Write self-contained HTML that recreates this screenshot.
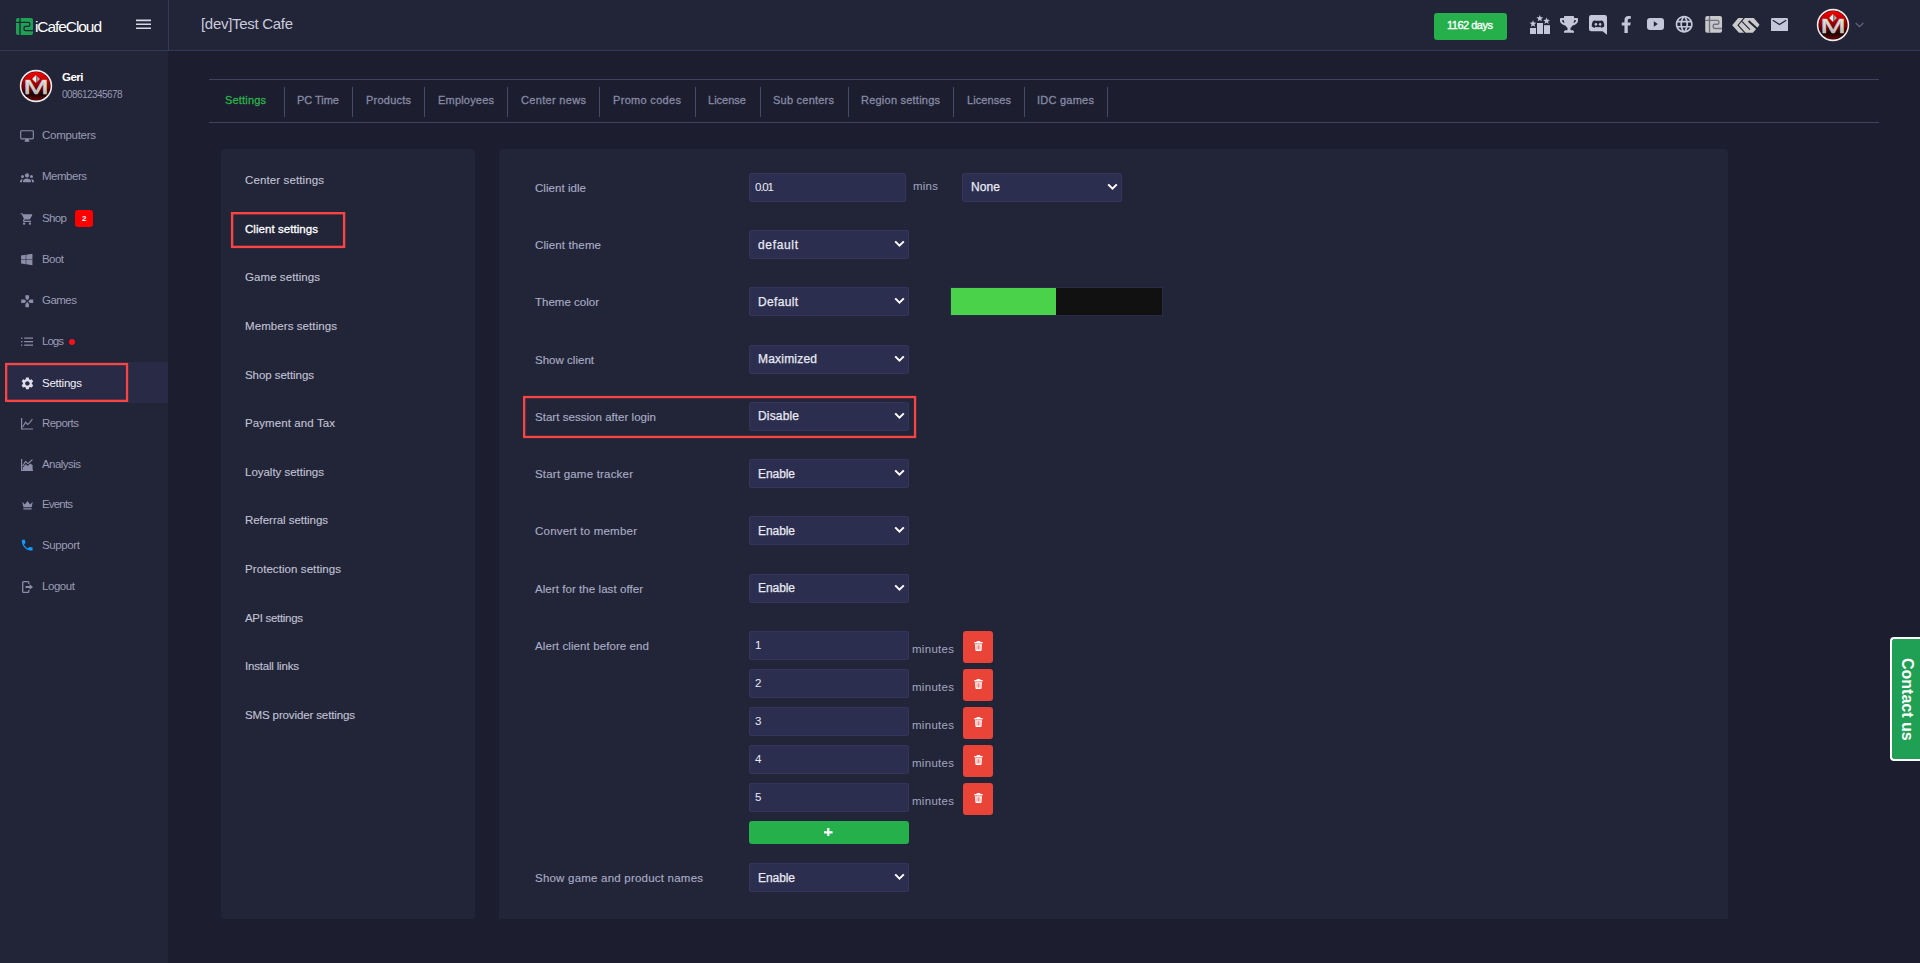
<!DOCTYPE html>
<html lang="en"><head><meta charset="utf-8"><title>iCafeCloud - Client settings</title>
<style>
html,body{margin:0;padding:0;overflow:hidden;}
body{width:1920px;height:963px;overflow:hidden;background:#1c1d2f;position:relative;font-family:"Liberation Sans",sans-serif;}
.b{position:absolute;display:block;}
.t{position:absolute;white-space:nowrap;line-height:1;display:block;}
</style></head><body>
<div class="b" style="left:0px;top:0px;width:1920px;height:50px;background:#222437;"></div>
<div class="b" style="left:0px;top:50px;width:1920px;height:1px;background:#363859;"></div>
<div class="b" style="left:0px;top:51px;width:168px;height:912px;background:#222437;"></div>
<div class="b" style="left:168px;top:0px;width:1px;height:50px;background:#363859;"></div>
<div class="b" style="left:5px;top:362px;width:163px;height:41px;background:#282a46;border-radius:4px 0 0 4px;"></div>
<div class="b" style="left:209px;top:79px;width:1670px;height:1px;background:#41435c;"></div>
<div class="b" style="left:209px;top:122px;width:1670px;height:1px;background:#41435c;"></div>
<div class="b" style="left:284px;top:87px;width:1px;height:30px;background:#484a63;"></div>
<div class="b" style="left:352px;top:87px;width:1px;height:30px;background:#484a63;"></div>
<div class="b" style="left:424px;top:87px;width:1px;height:30px;background:#484a63;"></div>
<div class="b" style="left:507px;top:87px;width:1px;height:30px;background:#484a63;"></div>
<div class="b" style="left:599px;top:87px;width:1px;height:30px;background:#484a63;"></div>
<div class="b" style="left:695px;top:87px;width:1px;height:30px;background:#484a63;"></div>
<div class="b" style="left:760px;top:87px;width:1px;height:30px;background:#484a63;"></div>
<div class="b" style="left:848px;top:87px;width:1px;height:30px;background:#484a63;"></div>
<div class="b" style="left:953px;top:87px;width:1px;height:30px;background:#484a63;"></div>
<div class="b" style="left:1024px;top:87px;width:1px;height:30px;background:#484a63;"></div>
<div class="b" style="left:1107px;top:87px;width:1px;height:30px;background:#484a63;"></div>
<div class="b" style="left:221px;top:149px;width:254px;height:770px;background:#222438;border-radius:4px;"></div>
<div class="b" style="left:499px;top:149px;width:1229px;height:770px;background:#222438;border-radius:4px 4px 0 0;"></div>
<svg class="b" style="left:4px;top:361px" width="126.2" height="43"><rect x="2.15" y="3.05" width="120.9" height="36.8" fill="none" stroke="#f94444" stroke-width="2.3"/></svg>
<svg class="b" style="left:229px;top:211px" width="118.3" height="39.1"><rect x="3.1" y="2.2" width="112" height="33.7" fill="none" stroke="#f94444" stroke-width="2.4"/></svg>
<svg class="b" style="left:522px;top:394px" width="396.2" height="46.1"><rect x="2.15" y="3.05" width="390.9" height="39.9" fill="none" stroke="#f94444" stroke-width="2.3"/></svg>
<div class="b" style="left:1434px;top:13px;width:73px;height:27px;background:#26b04b;border-radius:3px;"></div>
<div class="b" style="left:75px;top:210px;width:18px;height:17px;background:#fe0000;border-radius:3px;"></div>
<div class="b" style="left:69px;top:339px;width:6px;height:6px;background:#f5101c;border-radius:50%;"></div>
<div class="b" style="left:749px;top:173px;width:157px;height:29px;background:#2c2e4f;border:1px solid #33365a;border-radius:2px;box-sizing:border-box;"></div>
<div class="b" style="left:962px;top:173px;width:160px;height:29px;background:#2c2e4f;border:1px solid #33365a;border-radius:2px;box-sizing:border-box;"></div>
<svg class="b" style="left:1107.3px;top:183.1px" width="11" height="8" viewBox="0 0 11 8"><path d="M1.2 1.4 L5.5 5.7 L9.8 1.4" fill="none" stroke="#fff" stroke-width="2"/></svg>
<div class="b" style="left:749px;top:230px;width:160px;height:29px;background:#2c2e4f;border:1px solid #33365a;border-radius:2px;box-sizing:border-box;"></div>
<svg class="b" style="left:894.3px;top:240.1px" width="11" height="8" viewBox="0 0 11 8"><path d="M1.2 1.4 L5.5 5.7 L9.8 1.4" fill="none" stroke="#fff" stroke-width="2"/></svg>
<div class="b" style="left:749px;top:287px;width:160px;height:29px;background:#2c2e4f;border:1px solid #33365a;border-radius:2px;box-sizing:border-box;"></div>
<svg class="b" style="left:894.3px;top:297.1px" width="11" height="8" viewBox="0 0 11 8"><path d="M1.2 1.4 L5.5 5.7 L9.8 1.4" fill="none" stroke="#fff" stroke-width="2"/></svg>
<div class="b" style="left:749px;top:345px;width:160px;height:29px;background:#2c2e4f;border:1px solid #33365a;border-radius:2px;box-sizing:border-box;"></div>
<svg class="b" style="left:894.3px;top:355.1px" width="11" height="8" viewBox="0 0 11 8"><path d="M1.2 1.4 L5.5 5.7 L9.8 1.4" fill="none" stroke="#fff" stroke-width="2"/></svg>
<div class="b" style="left:749px;top:402px;width:160px;height:29px;background:#2c2e4f;border:1px solid #33365a;border-radius:2px;box-sizing:border-box;"></div>
<svg class="b" style="left:894.3px;top:412.1px" width="11" height="8" viewBox="0 0 11 8"><path d="M1.2 1.4 L5.5 5.7 L9.8 1.4" fill="none" stroke="#fff" stroke-width="2"/></svg>
<div class="b" style="left:749px;top:459px;width:160px;height:29px;background:#2c2e4f;border:1px solid #33365a;border-radius:2px;box-sizing:border-box;"></div>
<svg class="b" style="left:894.3px;top:469.1px" width="11" height="8" viewBox="0 0 11 8"><path d="M1.2 1.4 L5.5 5.7 L9.8 1.4" fill="none" stroke="#fff" stroke-width="2"/></svg>
<div class="b" style="left:749px;top:516px;width:160px;height:29px;background:#2c2e4f;border:1px solid #33365a;border-radius:2px;box-sizing:border-box;"></div>
<svg class="b" style="left:894.3px;top:526.1px" width="11" height="8" viewBox="0 0 11 8"><path d="M1.2 1.4 L5.5 5.7 L9.8 1.4" fill="none" stroke="#fff" stroke-width="2"/></svg>
<div class="b" style="left:749px;top:574px;width:160px;height:29px;background:#2c2e4f;border:1px solid #33365a;border-radius:2px;box-sizing:border-box;"></div>
<svg class="b" style="left:894.3px;top:584.1px" width="11" height="8" viewBox="0 0 11 8"><path d="M1.2 1.4 L5.5 5.7 L9.8 1.4" fill="none" stroke="#fff" stroke-width="2"/></svg>
<div class="b" style="left:749px;top:863px;width:160px;height:29px;background:#2c2e4f;border:1px solid #33365a;border-radius:2px;box-sizing:border-box;"></div>
<svg class="b" style="left:894.3px;top:873.1px" width="11" height="8" viewBox="0 0 11 8"><path d="M1.2 1.4 L5.5 5.7 L9.8 1.4" fill="none" stroke="#fff" stroke-width="2"/></svg>
<div class="b" style="left:950px;top:287px;width:213px;height:29px;background:#111;border:1px solid #2a2c45;box-sizing:border-box;"></div>
<div class="b" style="left:951px;top:288px;width:105px;height:27px;background:#4bd24b;"></div>
<div class="b" style="left:749px;top:631px;width:160px;height:29px;background:#2c2e4f;border:1px solid #33365a;border-radius:2px;box-sizing:border-box;"></div>
<div class="b" style="left:963px;top:631px;width:30px;height:32px;background:#ea4338;border-radius:3px;"></div>
<svg class="b" style="left:973.8px;top:641px" width="9" height="10.100" viewBox="0 0 10 11"><path d="M3.3 0h3.4l.6 1H9.6v1.6H.4V1H2.7zM1.1 3.4h7.8l-.5 6.6a1 1 0 0 1-1 1H2.6a1 1 0 0 1-1-1z" fill="#fff"/><path d="M3.4 4.6v4.8M5 4.6v4.8M6.6 4.6v4.8" stroke="#ea4338" stroke-width=".7"/></svg>
<div class="b" style="left:749px;top:669px;width:160px;height:29px;background:#2c2e4f;border:1px solid #33365a;border-radius:2px;box-sizing:border-box;"></div>
<div class="b" style="left:963px;top:669px;width:30px;height:32px;background:#ea4338;border-radius:3px;"></div>
<svg class="b" style="left:973.8px;top:679px" width="9" height="10.100" viewBox="0 0 10 11"><path d="M3.3 0h3.4l.6 1H9.6v1.6H.4V1H2.7zM1.1 3.4h7.8l-.5 6.6a1 1 0 0 1-1 1H2.6a1 1 0 0 1-1-1z" fill="#fff"/><path d="M3.4 4.6v4.8M5 4.6v4.8M6.6 4.6v4.8" stroke="#ea4338" stroke-width=".7"/></svg>
<div class="b" style="left:749px;top:707px;width:160px;height:29px;background:#2c2e4f;border:1px solid #33365a;border-radius:2px;box-sizing:border-box;"></div>
<div class="b" style="left:963px;top:707px;width:30px;height:32px;background:#ea4338;border-radius:3px;"></div>
<svg class="b" style="left:973.8px;top:717px" width="9" height="10.100" viewBox="0 0 10 11"><path d="M3.3 0h3.4l.6 1H9.6v1.6H.4V1H2.7zM1.1 3.4h7.8l-.5 6.6a1 1 0 0 1-1 1H2.6a1 1 0 0 1-1-1z" fill="#fff"/><path d="M3.4 4.6v4.8M5 4.6v4.8M6.6 4.6v4.8" stroke="#ea4338" stroke-width=".7"/></svg>
<div class="b" style="left:749px;top:745px;width:160px;height:29px;background:#2c2e4f;border:1px solid #33365a;border-radius:2px;box-sizing:border-box;"></div>
<div class="b" style="left:963px;top:745px;width:30px;height:32px;background:#ea4338;border-radius:3px;"></div>
<svg class="b" style="left:973.8px;top:755px" width="9" height="10.100" viewBox="0 0 10 11"><path d="M3.3 0h3.4l.6 1H9.6v1.6H.4V1H2.7zM1.1 3.4h7.8l-.5 6.6a1 1 0 0 1-1 1H2.6a1 1 0 0 1-1-1z" fill="#fff"/><path d="M3.4 4.6v4.8M5 4.6v4.8M6.6 4.6v4.8" stroke="#ea4338" stroke-width=".7"/></svg>
<div class="b" style="left:749px;top:783px;width:160px;height:29px;background:#2c2e4f;border:1px solid #33365a;border-radius:2px;box-sizing:border-box;"></div>
<div class="b" style="left:963px;top:783px;width:30px;height:32px;background:#ea4338;border-radius:3px;"></div>
<svg class="b" style="left:973.8px;top:793px" width="9" height="10.100" viewBox="0 0 10 11"><path d="M3.3 0h3.4l.6 1H9.6v1.6H.4V1H2.7zM1.1 3.4h7.8l-.5 6.6a1 1 0 0 1-1 1H2.6a1 1 0 0 1-1-1z" fill="#fff"/><path d="M3.4 4.6v4.8M5 4.6v4.8M6.6 4.6v4.8" stroke="#ea4338" stroke-width=".7"/></svg>
<div class="b" style="left:749px;top:821px;width:160px;height:23px;background:#25b04b;border-radius:3px;"></div>
<svg class="b" style="left:824px;top:827.500px" width="8.600" height="8.600" viewBox="0 0 8.600 8.600"><path d="M3.200 0h2.200v3.200H8.600v2.200H5.400V8.600H3.200V5.400H0V3.200h3.200z" fill="#fff"/></svg>
<div class="b" style="left:1890px;top:637px;width:30px;height:124px;background:#1fa055;border:2px solid #fff;border-right:0;border-radius:4px 0 0 4px;box-sizing:border-box;"></div>
<div class="t" style="left:1898.700px;top:658px;font-size:16px;font-weight:700;color:#fff;transform-origin:0 0;transform:rotate(90deg) translate(0,-100%);line-height:1;">Contact us</div>
<!-- logo -->
<svg class="b" style="left:16px;top:18px" width="17" height="17" viewBox="0 0 17 17"><rect width="17" height="17" rx="2" fill="#1fa154"/><path d="M4 0V17M0 4.3H12.2Q13.8 4.3 13.8 5.9V6.8Q13.8 8.4 12.2 8.4H9.6Q8 8.4 8 10V11Q8 12.6 9.6 12.6H17" fill="none" stroke="#1d2736" stroke-width="1.350"/></svg>
<!-- hamburger -->
<svg class="b" style="left:136px;top:19px" width="15" height="11" viewBox="0 0 15 11"><path d="M0 1.4H15M0 5.3H15M0 9.2H15" stroke="#d6d7e4" stroke-width="1.6"/></svg>
<!-- avatar sidebar -->
<svg class="b" style="left:19px;top:69px" width="34" height="34" viewBox="0 0 34 34"><defs><linearGradient id="ag" x1="0" y1="0" x2="0" y2="1"><stop offset="0" stop-color="#f50000"/><stop offset=".22" stop-color="#d00000"/><stop offset=".55" stop-color="#7c0000"/><stop offset=".8" stop-color="#1c0000"/><stop offset="1" stop-color="#6a0000"/></linearGradient><linearGradient id="dg" x1="0" y1="0" x2="1" y2="0"><stop offset="0" stop-color="#ffffff"/><stop offset=".5" stop-color="#e8e8e8"/><stop offset=".52" stop-color="#777"/><stop offset="1" stop-color="#d0d0d0"/></linearGradient><linearGradient id="sg" x1="0" y1="0" x2="0" y2="1"><stop offset="0" stop-color="#fafafa"/><stop offset=".5" stop-color="#d8d8d8"/><stop offset="1" stop-color="#9c9c9c"/></linearGradient></defs><circle cx="17" cy="17" r="16.2" fill="#ececf0"/><circle cx="17" cy="17" r="14.6" fill="#3a0505"/><circle cx="17" cy="17" r="14" fill="url(#ag)"/><text transform="translate(17.1 25) scale(1.56 1)" text-anchor="middle" font-family="Liberation Sans, sans-serif" font-weight="400" font-size="19.4" fill="url(#sg)" stroke="#c9c9c9" stroke-width=".6">M</text><path d="M17 5.900L20.900 10L17 14.100L13.100 10Z" fill="url(#dg)"/></svg>
<!-- avatar top -->
<svg class="b" style="left:1816px;top:8px" width="34" height="34" viewBox="0 0 34 34"><circle cx="17" cy="17" r="16.2" fill="#ececf0"/><circle cx="17" cy="17" r="14.6" fill="#3a0505"/><circle cx="17" cy="17" r="14" fill="url(#ag)"/><text transform="translate(17.1 25) scale(1.56 1)" text-anchor="middle" font-family="Liberation Sans, sans-serif" font-weight="400" font-size="19.4" fill="url(#sg)" stroke="#c9c9c9" stroke-width=".6">M</text><path d="M17 5.900L20.900 10L17 14.100L13.100 10Z" fill="url(#dg)"/></svg>
<svg class="b" style="left:1855px;top:22px" width="9" height="6" viewBox="0 0 9 6"><path d="M.7 1L4.5 4.6L8.3 1" fill="none" stroke="#62668a" stroke-width="1.200"/></svg>

<!-- sidebar icons -->
<svg class="b" style="left:20px;top:130px" width="14" height="12" viewBox="0 0 14 12"><rect x=".7" y=".7" width="12.6" height="8.1" rx=".8" fill="none" stroke="#8b8ea9" stroke-width="1.150"/><path d="M5.6 9L4.4 11.8H9.6L8.4 9Z" fill="#8b8ea9"/></svg>
<svg class="b" style="left:20px;top:172.5px" width="14" height="10" viewBox="0 0 14 10"><g fill="#8b8ea9"><circle cx="7" cy="2.4" r="2.1"/><path d="M3 9.3V8.2C3 6.6 5.2 5.6 7 5.6S11 6.6 11 8.2V9.3Z"/><circle cx="2.5" cy="3.4" r="1.5"/><circle cx="11.5" cy="3.4" r="1.5"/><path d="M0 9.3V8.4C0 7.2 1.3 6.2 3 6.1C2.3 6.7 2 7.4 2 8.2V9.3ZM14 9.3V8.4C14 7.2 12.7 6.2 11 6.1C11.7 6.7 12 7.4 12 8.2V9.3Z"/></g></svg>
<svg class="b" style="left:19.5px;top:212px" width="14" height="14" viewBox="0 0 24 24"><path fill="#8b8ea9" d="M7 18c-1.1 0-1.99.9-1.99 2S5.9 22 7 22s2-.9 2-2-.9-2-2-2zM1 2v2h2l3.6 7.59-1.35 2.45c-.16.28-.25.61-.25.96 0 1.1.9 2 2 2h12v-2H7.42c-.14 0-.25-.11-.25-.25l.03-.12.9-1.63h7.45c.75 0 1.41-.41 1.75-1.03l3.58-6.49c.08-.14.12-.31.12-.48 0-.55-.45-1-1-1H5.21l-.94-2H1zm16 16c-1.1 0-1.99.9-1.99 2s.89 2 1.99 2 2-.9 2-2-.9-2-2-2z"/></svg>
<svg class="b" style="left:21px;top:253.300px" width="11.5" height="13" viewBox="0 0 448 512"><path fill="#8b8ea9" d="M0 93.7l183.6-25.3v177.4H0V93.7zm0 324.6l183.6 25.3V268.4H0v149.9zm203.8 28L448 480V268.4H203.8v177.9zm0-380.6v180.1H448V32L203.8 65.7z"/></svg>
<svg class="b" style="left:19.8px;top:293.6px" width="14.4" height="14.4" viewBox="0 0 24 24"><path fill="#8b8ea9" d="M15 7.5V2H9v5.5l3 3 3-3zM7.5 9H2v6h5.5l3-3-3-3zM9 16.500V22h6v-5.500l-3-3-3 3zM16.500 9l-3 3 3 3H22V9h-5.500z"/></svg>
<svg class="b" style="left:21px;top:337.300px" width="12" height="10" viewBox="0 0 12 10"><path d="M0 1.200H1.400M3.200 1.200H12M0 4.650H1.400M3.200 4.650H12M0 8.100H1.400M3.200 8.100H12" stroke="#8b8ea9" stroke-width="1.200"/></svg>
<svg class="b" style="left:19.600px;top:375.900px" width="14.8" height="14.8" viewBox="0 0 24 24"><path fill="#dcdde8" d="M19.140 12.940c.04-.3.06-.61.06-.94 0-.32-.02-.64-.07-.94l2.030-1.580c.18-.14.23-.41.12-.61l-1.920-3.320c-.12-.22-.37-.29-.59-.22l-2.390.96c-.5-.38-1.030-.7-1.620-.94l-.36-2.540c-.04-.24-.24-.41-.48-.41h-3.840c-.24 0-.43.17-.47.41l-.36 2.540c-.59.24-1.130.57-1.620.94l-2.390-.96c-.22-.08-.47 0-.59.22L2.740 8.870c-.12.21-.08.47.12.61l2.030 1.580c-.05.3-.09.63-.09.94s.02.640.07.940l-2.030 1.580c-.18.14-.23.410-.12.610l1.920 3.320c.12.220.37.290.59.220l2.390-.96c.5.380 1.030.7 1.620.94l.36 2.540c.05.240.24.410.48.410h3.840c.24 0 .44-.17.47-.41l.36-2.540c.59-.24 1.130-.56 1.620-.94l2.390.96c.22.080.47 0 .59-.22l1.920-3.320c.12-.22.070-.47-.12-.61l-2.010-1.580zM12 15.600c-1.980 0-3.600-1.620-3.600-3.600s1.620-3.600 3.600-3.600 3.600 1.620 3.600 3.600-1.620 3.600-3.600 3.600z"/></svg>
<svg class="b" style="left:21px;top:418px" width="12" height="12" viewBox="0 0 12 12"><path d="M.6 0V11H12" fill="none" stroke="#8b8ea9" stroke-width="1.2"/><path d="M1.6 9L4.6 4.2L6.6 6.4L8.8 4.6L11.4 1" fill="none" stroke="#8b8ea9" stroke-width="1.1"/></svg>
<svg class="b" style="left:21px;top:459px" width="12" height="12" viewBox="0 0 12 12"><path d="M.6 0V11.4H12" fill="none" stroke="#8b8ea9" stroke-width="1.2"/><path d="M1.8 11V8.6L4.6 5.2L6.8 7L9 4.6L11.6 6V11Z" fill="#8b8ea9"/><path d="M1.6 7L4.6 2.4L6.8 4.6L8.8 3L11.4 .6" fill="none" stroke="#8b8ea9" stroke-width="1.1"/></svg>
<svg class="b" style="left:21.5px;top:500.5px" width="11" height="9" viewBox="0 0 11 9"><path fill="#8b8ea9" d="M.2 .8L2.9 3.6L5.5 0L8.1 3.6L10.800 .8L9.6 6.200H1.400ZM1.400 7.300H9.600V8.600H1.400Z"/></svg>
<svg class="b" style="left:19.6px;top:538.4px" width="14.400" height="14.400" viewBox="0 0 24 24"><path fill="#0d9bff" d="M6.620 10.790c1.440 2.830 3.760 5.140 6.590 6.590l2.200-2.200c.27-.27.67-.36 1.020-.24 1.120.37 2.330.57 3.570.57.55 0 1 .45 1 1V20c0 .55-.45 1-1 1-9.390 0-17-7.610-17-17 0-.55.45-1 1-1h3.500c.55 0 1 .45 1 1 0 1.250.2 2.450.57 3.570.11.350.03.740-.25 1.020l-2.200 2.200z"/></svg>
<svg class="b" style="left:21.500px;top:581px" width="11.500" height="12" viewBox="0 0 11.500 12"><path d="M6.800 3V1.600Q6.800 .7 5.900 .7H1.600Q.7 .7 .7 1.600V10.400Q.7 11.300 1.600 11.300H5.900Q6.800 11.300 6.800 10.400V9" fill="none" stroke="#8b8ea9" stroke-width="1.300"/><path d="M3.600 5.100H7.600V3.200L11 6L7.600 8.800V6.900H3.600Z" fill="#8b8ea9"/></svg>

<!-- top right icons -->
<svg class="b" style="left:1529px;top:14px" width="22" height="21" viewBox="0 0 22 21"><g fill="#c5c7d8"><rect x="1" y="14" width="6" height="6"/><rect x="8" y="9" width="6" height="11"/><rect x="15" y="11.200" width="6" height="8.800"/><path d="M0 -3.500L.95 -1.200L3.400 -1.050L1.500 .55L2.100 2.950L0 1.600L-2.100 2.950L-1.500 .55L-3.400 -1.050L-.95 -1.200Z" transform="translate(4 9.800)"/><path d="M0 -3.500L.95 -1.200L3.400 -1.050L1.500 .55L2.100 2.950L0 1.600L-2.100 2.950L-1.500 .55L-3.400 -1.050L-.95 -1.200Z" transform="translate(10.800 4.400)"/><path d="M0 -3.500L.95 -1.200L3.400 -1.050L1.500 .55L2.100 2.950L0 1.600L-2.100 2.950L-1.500 .55L-3.400 -1.050L-.95 -1.200Z" transform="translate(17.600 7)"/></g></svg>
<svg class="b" style="left:1560px;top:16px" width="18" height="16.800" viewBox="0 0 576 512" preserveAspectRatio="none"><path fill="#c5c7d8" d="M552 64H448V24c0-13.300-10.700-24-24-24H152c-13.300 0-24 10.700-24 24v40H24C10.700 64 0 74.700 0 88v56c0 35.700 22.500 72.400 61.900 100.700 31.500 22.700 69.800 37.100 110 41.700C203.300 338.500 240 360 240 360v72h-48c-35.300 0-64 20.700-64 56v12c0 6.600 5.400 12 12 12h296c6.600 0 12-5.400 12-12v-12c0-35.300-28.700-56-64-56h-48v-72s36.700-21.500 68.100-73.600c40.300-4.600 78.600-19 110-41.700 39.300-28.300 61.900-65 61.900-100.700V88c0-13.300-10.700-24-24-24zM99.300 192.800C74.900 175.200 64 155.600 64 144v-16h64.200c1 32.600 5.800 61.200 12.800 86.200-15.100-5.200-29.200-12.400-41.700-21.400zM512 144c0 16.100-17.700 36.100-35.300 48.800-12.500 9-26.700 16.200-41.800 21.400 7-25 11.800-53.600 12.800-86.200H512v16z"/></svg>
<svg class="b" style="left:1589px;top:15px" width="18" height="20" viewBox="0 0 18 20"><path fill="#c5c7d8" d="M2.200 0H15.800Q18 0 18 2.200V19.800L13.600 16.200H2.200Q0 16.200 0 14V2.200Q0 0 2.200 0Z"/><path fill="#222437" d="M6.200 5.200C5.200 5.400 4.300 5.800 3.800 6.200C3 8 2.700 10 2.800 11.600C3.700 12.300 4.700 12.700 5.600 12.900L6.200 11.900C5.800 11.800 5.500 11.600 5.200 11.400C7.400 12.400 10.600 12.400 12.800 11.400C12.500 11.600 12.200 11.800 11.800 11.900L12.400 12.900C13.300 12.700 14.300 12.300 15.200 11.600C15.300 10 15 8 14.200 6.200C13.700 5.800 12.800 5.400 11.800 5.200L11.400 6C9.800 5.800 8.200 5.800 6.600 6Z"/><ellipse cx="6.900" cy="9.300" rx="1.250" ry="1.400" fill="#c5c7d8"/><ellipse cx="11.100" cy="9.300" rx="1.250" ry="1.400" fill="#c5c7d8"/></svg>
<svg class="b" style="left:1621.300px;top:16px" width="10.600" height="17" viewBox="0 0 320 512"><path fill="#c5c7d8" d="M279.140 288l14.220-92.660h-88.910v-60.130c0-25.350 12.420-50.060 52.240-50.060h40.420V6.260S260.430 0 225.360 0c-73.220 0-121.080 44.380-121.080 124.720v70.620H22.890V288h81.390v224h100.170V288z"/></svg>
<svg class="b" style="left:1647px;top:18.300px" width="17" height="12" viewBox="0 0 17 12"><rect width="17" height="12" rx="3" fill="#c5c7d8"/><path d="M6.800 3.300L10.800 6L6.800 8.700Z" fill="#222437"/></svg>
<svg class="b" style="left:1674.300px;top:14px" width="20.400" height="20.400" viewBox="0 0 24 24"><path fill="#c5c7d8" d="M11.990 2C6.470 2 2 6.480 2 12s4.470 10 9.990 10C17.520 22 22 17.520 22 12S17.520 2 11.990 2zm6.930 6h-2.950c-.32-1.250-.78-2.450-1.380-3.560 1.840.63 3.370 1.910 4.330 3.560zM12 4.040c.83 1.200 1.480 2.530 1.910 3.960h-3.820c.43-1.430 1.080-2.760 1.910-3.960zM4.260 14C4.100 13.360 4 12.690 4 12s.1-1.360.26-2h3.380c-.08.660-.14 1.320-.14 2 0 .68.060 1.340.14 2H4.260zm.82 2h2.950c.32 1.250.78 2.450 1.380 3.560-1.840-.63-3.370-1.900-4.330-3.560zm2.950-8H5.080c.96-1.660 2.490-2.930 4.330-3.560C8.810 5.550 8.350 6.750 8.030 8zM12 19.960c-.83-1.200-1.480-2.530-1.910-3.960h3.820c-.43 1.430-1.080 2.760-1.910 3.960zM14.340 14H9.660c-.09-.66-.16-1.320-.16-2 0-.68.070-1.350.16-2h4.680c.09.650.16 1.320.16 2 0 .68-.07 1.340-.16 2zm.25 5.560c.6-1.110 1.060-2.310 1.380-3.560h2.950c-.96 1.650-2.490 2.930-4.330 3.560zM16.360 14c.08-.66.14-1.320.14-2 0-.68-.06-1.340-.14-2h3.380c.16.640.26 1.310.26 2s-.1 1.360-.26 2h-3.380z"/></svg>
<svg class="b" style="left:1705.400px;top:16.200px" width="17.300" height="16.800" viewBox="0 0 17 17"><rect width="17" height="17" rx="2" fill="#c8c8c8"/><path d="M4.300 0V17M0 4.400H12.200Q13.800 4.400 13.800 6V6.800Q13.800 8.400 12.200 8.400H9.600Q8 8.400 8 10V11Q8 12.600 9.600 12.600H17" fill="none" stroke="#6e7084" stroke-width="1.400"/></svg>
<svg class="b" style="left:1728px;top:14px" width="36" height="23" viewBox="0 0 36 23"><path fill="#cbcbcb" d="M4.180 11.230L10.270 3.940H25.800L31.530 10.750L29.380 13.860L24.840 18.870H10.990Z"/><path d="M16.480 3.700L10.030 11.230L17.200 19.100" fill="none" stroke="#222437" stroke-width="1.100"/><path d="M13.860 7.400L21.980 15.530" fill="none" stroke="#222437" stroke-width="1.100"/><path d="M20.540 6.930L29.200 14.800" fill="none" stroke="#222437" stroke-width="1.900"/></svg>
<svg class="b" style="left:1771px;top:17.700px" width="17" height="13.600" viewBox="0 0 17 13.600"><rect width="17" height="13.600" rx="1.400" fill="#c5c7d8"/><path d="M1.800 2.200L8.500 6.600L15.200 2.200" fill="none" stroke="#222437" stroke-width="1.300"/></svg>

<span class="t" style="left:35px;top:18.88px;font-size:15.5px;color:#ffffff;font-weight:400;letter-spacing:-1.076px;">iCafeCloud</span>
<span class="t" style="left:201px;top:16.30px;font-size:15px;color:#c9cbdc;font-weight:400;letter-spacing:-0.299px;">[dev]Test Cafe</span>
<span class="t" style="left:62px;top:72.27px;font-size:11.5px;color:#ffffff;font-weight:700;letter-spacing:-0.505px;">Geri</span>
<span class="t" style="left:62px;top:89.53px;font-size:10px;color:#9799b3;font-weight:400;letter-spacing:-0.568px;">008612345678</span>
<span class="t" style="left:42px;top:130.27px;font-size:11.5px;color:#9a9db6;font-weight:400;letter-spacing:-0.281px;">Computers</span>
<span class="t" style="left:42px;top:171.27px;font-size:11.5px;color:#9a9db6;font-weight:400;letter-spacing:-0.490px;">Members</span>
<span class="t" style="left:42px;top:213.27px;font-size:11.5px;color:#9a9db6;font-weight:400;letter-spacing:-0.620px;">Shop</span>
<span class="t" style="left:42px;top:254.27px;font-size:11.5px;color:#9a9db6;font-weight:400;letter-spacing:-0.557px;">Boot</span>
<span class="t" style="left:42px;top:295.27px;font-size:11.5px;color:#9a9db6;font-weight:400;letter-spacing:-0.520px;">Games</span>
<span class="t" style="left:42px;top:336.27px;font-size:11.5px;color:#9a9db6;font-weight:400;letter-spacing:-0.979px;">Logs</span>
<span class="t" style="left:42px;top:378.27px;font-size:11.5px;color:#f2f2f7;font-weight:400;letter-spacing:-0.223px;">Settings</span>
<span class="t" style="left:42px;top:418.27px;font-size:11.5px;color:#9a9db6;font-weight:400;letter-spacing:-0.547px;">Reports</span>
<span class="t" style="left:42px;top:459.27px;font-size:11.5px;color:#9a9db6;font-weight:400;letter-spacing:-0.547px;">Analysis</span>
<span class="t" style="left:42px;top:499.27px;font-size:11.5px;color:#9a9db6;font-weight:400;letter-spacing:-0.834px;">Events</span>
<span class="t" style="left:42px;top:540.27px;font-size:11.5px;color:#9a9db6;font-weight:400;letter-spacing:-0.380px;">Support</span>
<span class="t" style="left:42px;top:581.27px;font-size:11.5px;color:#9a9db6;font-weight:400;letter-spacing:-0.438px;">Logout</span>
<span class="t" style="left:82px;top:215.23px;font-size:8px;color:#ffffff;font-weight:700;letter-spacing:-0.453px;">2</span>
<span class="t" style="left:1447px;top:19.69px;font-size:11px;color:#ffffff;font-weight:400;letter-spacing:-0.494px;-webkit-text-stroke:0.35px;">1162 days</span>
<span class="t" style="left:225px;top:94.69px;font-size:11px;color:#2bb24c;font-weight:400;letter-spacing:0.179px;-webkit-text-stroke:0.3px;">Settings</span>
<span class="t" style="left:297px;top:94.69px;font-size:11px;color:#868aa3;font-weight:400;letter-spacing:-0.031px;-webkit-text-stroke:0.3px;">PC Time</span>
<span class="t" style="left:366px;top:94.69px;font-size:11px;color:#868aa3;font-weight:400;letter-spacing:0.225px;-webkit-text-stroke:0.3px;">Products</span>
<span class="t" style="left:438px;top:94.69px;font-size:11px;color:#868aa3;font-weight:400;letter-spacing:0.197px;-webkit-text-stroke:0.3px;">Employees</span>
<span class="t" style="left:521px;top:94.69px;font-size:11px;color:#868aa3;font-weight:400;letter-spacing:0.323px;-webkit-text-stroke:0.3px;">Center news</span>
<span class="t" style="left:613px;top:94.69px;font-size:11px;color:#868aa3;font-weight:400;letter-spacing:0.319px;-webkit-text-stroke:0.3px;">Promo codes</span>
<span class="t" style="left:708px;top:94.69px;font-size:11px;color:#868aa3;font-weight:400;letter-spacing:0.013px;-webkit-text-stroke:0.3px;">License</span>
<span class="t" style="left:773px;top:94.69px;font-size:11px;color:#868aa3;font-weight:400;letter-spacing:0.230px;-webkit-text-stroke:0.3px;">Sub centers</span>
<span class="t" style="left:861px;top:94.69px;font-size:11px;color:#868aa3;font-weight:400;letter-spacing:0.227px;-webkit-text-stroke:0.3px;">Region settings</span>
<span class="t" style="left:967px;top:94.69px;font-size:11px;color:#868aa3;font-weight:400;letter-spacing:0.083px;-webkit-text-stroke:0.3px;">Licenses</span>
<span class="t" style="left:1037px;top:94.69px;font-size:11px;color:#868aa3;font-weight:400;letter-spacing:0.246px;-webkit-text-stroke:0.3px;">IDC games</span>
<span class="t" style="left:245px;top:175.27px;font-size:11.5px;color:#c0c2d3;font-weight:400;letter-spacing:0.117px;-webkit-text-stroke:0.12px;">Center settings</span>
<span class="t" style="left:245px;top:224.27px;font-size:11.5px;color:#ffffff;font-weight:400;letter-spacing:0.055px;-webkit-text-stroke:0.3px;">Client settings</span>
<span class="t" style="left:245px;top:272.27px;font-size:11.5px;color:#c0c2d3;font-weight:400;letter-spacing:0.070px;-webkit-text-stroke:0.12px;">Game settings</span>
<span class="t" style="left:245px;top:321.27px;font-size:11.5px;color:#c0c2d3;font-weight:400;letter-spacing:0.082px;-webkit-text-stroke:0.12px;">Members settings</span>
<span class="t" style="left:245px;top:370.27px;font-size:11.5px;color:#c0c2d3;font-weight:400;letter-spacing:-0.057px;-webkit-text-stroke:0.12px;">Shop settings</span>
<span class="t" style="left:245px;top:418.27px;font-size:11.5px;color:#c0c2d3;font-weight:400;letter-spacing:0.096px;-webkit-text-stroke:0.12px;">Payment and Tax</span>
<span class="t" style="left:245px;top:467.27px;font-size:11.5px;color:#c0c2d3;font-weight:400;letter-spacing:-0.018px;-webkit-text-stroke:0.12px;">Loyalty settings</span>
<span class="t" style="left:245px;top:515.27px;font-size:11.5px;color:#c0c2d3;font-weight:400;letter-spacing:-0.046px;-webkit-text-stroke:0.12px;">Referral settings</span>
<span class="t" style="left:245px;top:564.27px;font-size:11.5px;color:#c0c2d3;font-weight:400;letter-spacing:0.077px;-webkit-text-stroke:0.12px;">Protection settings</span>
<span class="t" style="left:245px;top:613.27px;font-size:11.5px;color:#c0c2d3;font-weight:400;letter-spacing:-0.307px;-webkit-text-stroke:0.12px;">API settings</span>
<span class="t" style="left:245px;top:661.27px;font-size:11.5px;color:#c0c2d3;font-weight:400;letter-spacing:-0.188px;-webkit-text-stroke:0.12px;">Install links</span>
<span class="t" style="left:245px;top:710.27px;font-size:11.5px;color:#c0c2d3;font-weight:400;letter-spacing:-0.125px;-webkit-text-stroke:0.12px;">SMS provider settings</span>
<span class="t" style="left:535px;top:183.27px;font-size:11.5px;color:#a9acc4;font-weight:400;letter-spacing:0.050px;-webkit-text-stroke:0.15px;">Client idle</span>
<span class="t" style="left:535px;top:240.27px;font-size:11.5px;color:#a9acc4;font-weight:400;letter-spacing:0.131px;-webkit-text-stroke:0.15px;">Client theme</span>
<span class="t" style="left:535px;top:297.27px;font-size:11.5px;color:#a9acc4;font-weight:400;letter-spacing:0.008px;-webkit-text-stroke:0.15px;">Theme color</span>
<span class="t" style="left:535px;top:355.27px;font-size:11.5px;color:#a9acc4;font-weight:400;letter-spacing:0.019px;-webkit-text-stroke:0.15px;">Show client</span>
<span class="t" style="left:535px;top:412.27px;font-size:11.5px;color:#a9acc4;font-weight:400;letter-spacing:0.035px;-webkit-text-stroke:0.15px;">Start session after login</span>
<span class="t" style="left:535px;top:469.27px;font-size:11.5px;color:#a9acc4;font-weight:400;letter-spacing:0.200px;-webkit-text-stroke:0.15px;">Start game tracker</span>
<span class="t" style="left:535px;top:526.27px;font-size:11.5px;color:#a9acc4;font-weight:400;letter-spacing:0.223px;-webkit-text-stroke:0.15px;">Convert to member</span>
<span class="t" style="left:535px;top:584.27px;font-size:11.5px;color:#a9acc4;font-weight:400;letter-spacing:0.063px;-webkit-text-stroke:0.15px;">Alert for the last offer</span>
<span class="t" style="left:535px;top:641.27px;font-size:11.5px;color:#a9acc4;font-weight:400;letter-spacing:0.097px;-webkit-text-stroke:0.15px;">Alert client before end</span>
<span class="t" style="left:535px;top:873.27px;font-size:11.5px;color:#a9acc4;font-weight:400;letter-spacing:0.216px;-webkit-text-stroke:0.15px;">Show game and product names</span>
<span class="t" style="left:755px;top:182.27px;font-size:11.5px;color:#e9eaf3;font-weight:400;letter-spacing:-1.130px;">0.01</span>
<span class="t" style="left:913px;top:181.27px;font-size:11.5px;color:#a3a6bf;font-weight:400;letter-spacing:0.240px;">mins</span>
<span class="t" style="left:971px;top:181.34px;font-size:12px;color:#e9eaf3;font-weight:400;letter-spacing:0.104px;-webkit-text-stroke:0.25px;">None</span>
<span class="t" style="left:758px;top:239.34px;font-size:12px;color:#e9eaf3;font-weight:400;letter-spacing:0.661px;-webkit-text-stroke:0.25px;">default</span>
<span class="t" style="left:758px;top:296.34px;font-size:12px;color:#e9eaf3;font-weight:400;letter-spacing:0.328px;-webkit-text-stroke:0.25px;">Default</span>
<span class="t" style="left:758px;top:353.34px;font-size:12px;color:#e9eaf3;font-weight:400;letter-spacing:0.205px;-webkit-text-stroke:0.25px;">Maximized</span>
<span class="t" style="left:758px;top:410.34px;font-size:12px;color:#e9eaf3;font-weight:400;letter-spacing:0.161px;-webkit-text-stroke:0.25px;">Disable</span>
<span class="t" style="left:758px;top:468.34px;font-size:12px;color:#e9eaf3;font-weight:400;letter-spacing:-0.075px;-webkit-text-stroke:0.25px;">Enable</span>
<span class="t" style="left:758px;top:525.34px;font-size:12px;color:#e9eaf3;font-weight:400;letter-spacing:-0.075px;-webkit-text-stroke:0.25px;">Enable</span>
<span class="t" style="left:758px;top:582.34px;font-size:12px;color:#e9eaf3;font-weight:400;letter-spacing:-0.075px;-webkit-text-stroke:0.25px;">Enable</span>
<span class="t" style="left:758px;top:872.34px;font-size:12px;color:#e9eaf3;font-weight:400;letter-spacing:-0.075px;-webkit-text-stroke:0.25px;">Enable</span>
<span class="t" style="left:755px;top:640.27px;font-size:11.5px;color:#e9eaf3;font-weight:400;letter-spacing:0.000px;">1</span>
<span class="t" style="left:912px;top:644.27px;font-size:11.5px;color:#a3a6bf;font-weight:400;letter-spacing:0.286px;">minutes</span>
<span class="t" style="left:755px;top:678.27px;font-size:11.5px;color:#e9eaf3;font-weight:400;letter-spacing:0.000px;">2</span>
<span class="t" style="left:912px;top:682.27px;font-size:11.5px;color:#a3a6bf;font-weight:400;letter-spacing:0.286px;">minutes</span>
<span class="t" style="left:755px;top:716.27px;font-size:11.5px;color:#e9eaf3;font-weight:400;letter-spacing:0.000px;">3</span>
<span class="t" style="left:912px;top:720.27px;font-size:11.5px;color:#a3a6bf;font-weight:400;letter-spacing:0.286px;">minutes</span>
<span class="t" style="left:755px;top:754.27px;font-size:11.5px;color:#e9eaf3;font-weight:400;letter-spacing:0.000px;">4</span>
<span class="t" style="left:912px;top:758.27px;font-size:11.5px;color:#a3a6bf;font-weight:400;letter-spacing:0.286px;">minutes</span>
<span class="t" style="left:755px;top:792.27px;font-size:11.5px;color:#e9eaf3;font-weight:400;letter-spacing:0.000px;">5</span>
<span class="t" style="left:912px;top:796.27px;font-size:11.5px;color:#a3a6bf;font-weight:400;letter-spacing:0.286px;">minutes</span>
</body></html>
